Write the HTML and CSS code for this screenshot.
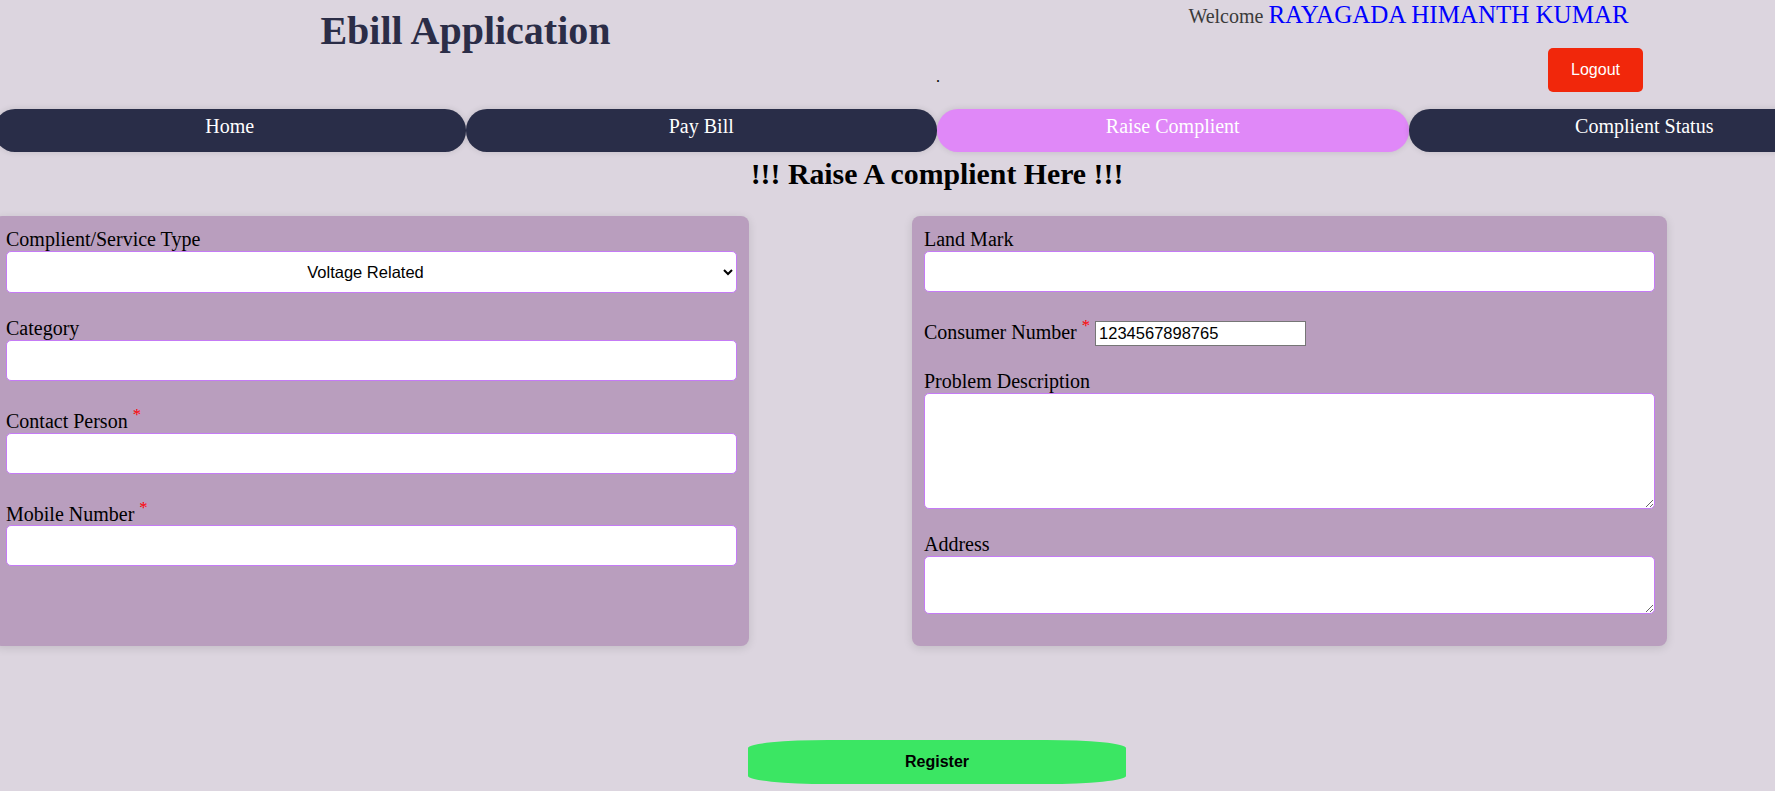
FILE: index.html
```html
<!DOCTYPE html>
<html lang="en">
<head>
<meta charset="utf-8">
<title>Ebill Application</title>
<link rel="stylesheet" href="styles.css">
</head>
<body>
<div class="page">
  <header class="header">
    <div class="header-left">
      <h1 class="app-title">Ebill Application</h1>
      <div class="dot">.</div>
    </div>
    <div class="header-right">
      <div class="welcome">Welcome <span class="user-name">RAYAGADA HIMANTH KUMAR</span></div>
      <div class="logout-row"><button class="logout-btn">Logout</button></div>
    </div>
  </header>

  <nav class="nav">
    <a class="nav-btn">Home</a>
    <a class="nav-btn">Pay Bill</a>
    <a class="nav-btn active">Raise Complient</a>
    <a class="nav-btn">Complient Status</a>
  </nav>

  <h2 class="page-heading">!!! Raise A complient Here !!!</h2>

  <form class="form-row">
    <div class="panel">
      <div class="field">
        <label class="field-label">Complient/Service Type</label>
        <select class="field-select">
          <option>Voltage Related</option>
        </select>
      </div>
      <div class="field">
        <label class="field-label">Category</label>
        <input class="field-input" type="text">
      </div>
      <div class="field">
        <label class="field-label">Contact Person <sup class="req">*</sup></label>
        <input class="field-input" type="text">
      </div>
      <div class="field">
        <label class="field-label">Mobile Number <sup class="req">*</sup></label>
        <input class="field-input" type="text">
      </div>
    </div>

    <div class="panel">
      <div class="field">
        <label class="field-label">Land Mark</label>
        <input class="field-input" type="text">
      </div>
      <div class="field inline-field">
        Consumer Number <sup class="req">*</sup> <input class="consumer-input" type="text" value="1234567898765">
      </div>
      <div class="field">
        <label class="field-label">Problem Description</label>
        <textarea class="field-area area-tall"></textarea>
      </div>
      <div class="field">
        <label class="field-label">Address</label>
        <textarea class="field-area area-short"></textarea>
      </div>
    </div>
  </form>

  <button class="register-btn">Register</button>
</div>
</body>
</html>
```

FILE: styles.css
```css
html {
  overflow: hidden;
}

body {
  margin: 0;
  background: #dcd5df;
  font-family: "Liberation Serif", "Times New Roman", serif;
  color: #000;
}

.page {
  width: 1886px;
  margin-left: -6px;
}

/* header */
.header {
  display: grid;
  grid-template-columns: 1fr 1fr;
  height: 109px;
}

.app-title {
  margin: 8px 0 0;
  font-size: 40px;
  line-height: 46px;
  font-weight: bold;
  text-align: center;
  color: #2b2d47;
}

.dot {
  margin-top: 14px;
  margin-right: -3px;
  font-size: 16px;
  line-height: 18px;
  text-align: right;
  color: #000;
}

.welcome {
  height: 30px;
  font-size: 20px;
  line-height: 30px;
  text-align: center;
  color: #3a3a3a;
}

.user-name {
  font-size: 25px;
  color: #0000ff;
}

.logout-row {
  display: flex;
  justify-content: flex-end;
  padding-right: 237px;
  margin-top: 18px;
}

.logout-btn {
  width: 95px;
  height: 44px;
  border: none;
  border-radius: 5px;
  background: #f1270b;
  color: #fff;
  font-family: "Liberation Sans", Arial, sans-serif;
  font-size: 16px;
  padding: 0;
}

/* nav */
.nav {
  display: flex;
}

.nav-btn {
  flex: 1;
  height: 43px;
  box-sizing: border-box;
  padding-top: 6px;
  border-radius: 21px;
  background: #292d48;
  color: #fff;
  font-size: 20px;
  line-height: 23px;
  text-align: center;
  box-shadow: 0 0 6px rgba(0, 0, 0, 0.12);
}

.nav-btn.active {
  background: #e088f8;
}

/* heading */
.page-heading {
  margin: 5px 0 0;
  font-size: 29.8px;
  line-height: 34px;
  font-weight: bold;
  text-align: center;
}

/* form */
.form-row {
  display: flex;
  gap: 163px;
  margin: 25px 0 0;
}

.panel {
  width: 755px;
  height: 430px;
  box-sizing: border-box;
  padding: 12px;
  background: #b99ebe;
  border-radius: 8px;
  box-shadow: 0 2px 10px rgba(0, 0, 0, 0.12);
}

.field {
  margin-bottom: 24px;
}

.field-label {
  display: block;
  font-size: 20px;
  line-height: 23px;
}

.inline-field {
  font-size: 20px;
  line-height: 23px;
}

.req {
  color: #ff0000;
  line-height: 19px;
}

.field-input,
.field-select,
.field-area {
  display: block;
  width: 100%;
  box-sizing: border-box;
  border: 1px solid #c57bf6;
  border-radius: 5px;
  background: #fff;
  margin: 0;
}

.field-input {
  height: 41px;
}

.field-select {
  height: 42px;
  font-family: "Liberation Sans", Arial, sans-serif;
  font-size: 16.5px;
  color: #000;
  text-align: center;
  text-align-last: center;
}

.field-area {
  font-family: "Liberation Mono", monospace;
}

.area-tall {
  height: 116px;
}

.area-short {
  height: 58px;
}

.consumer-input {
  width: 211px;
  box-sizing: border-box;
  font-family: "Liberation Sans", Arial, sans-serif;
  font-size: 16.5px;
  padding: 2px 3px;
  border: 1px solid #767676;
  border-radius: 0;
  background: #fff;
  color: #000;
}

/* register */
.register-btn {
  display: block;
  width: 378px;
  height: 44px;
  margin: 94px auto 0;
  border: none;
  border-radius: 80px / 8px;
  background: #3be663;
  color: #000;
  font-family: "Liberation Sans", Arial, sans-serif;
  font-weight: bold;
  font-size: 16px;
  padding: 0;
}
```
